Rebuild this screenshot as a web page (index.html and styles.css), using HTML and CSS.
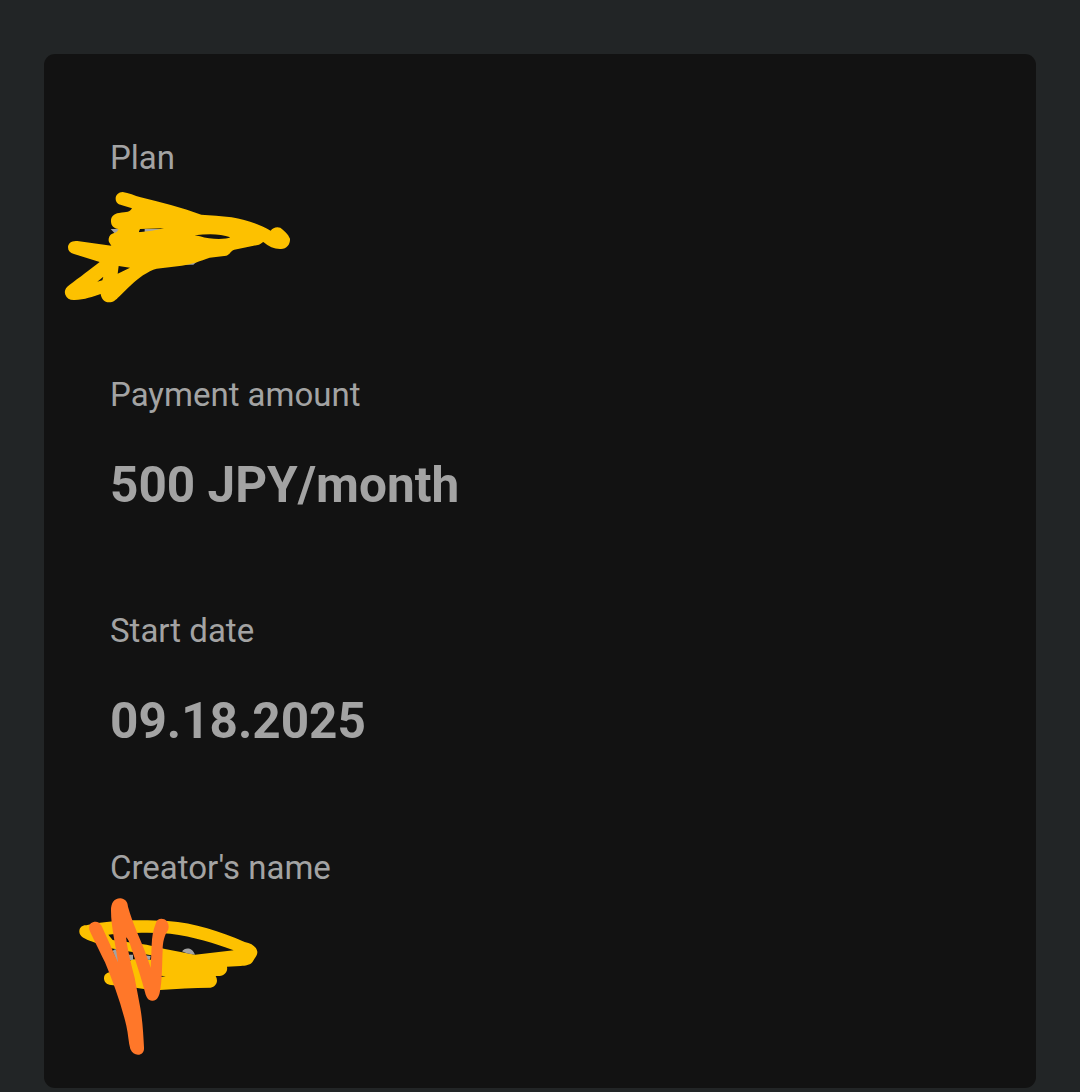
FILE: index.html
```html
<!DOCTYPE html>
<html lang="en">
<head>
    <meta charset="UTF-8">
    <meta name="viewport" content="width=device-width, initial-scale=1.0">
    <title>Plan details</title>
    <link rel="stylesheet" href="styles.css">
</head>
<body>
    <div class="plan-card">
        <div class="plan-item">
            <div class="label">Plan</div>
            <div class="value">
                <!-- Plan name is scribbled out -->
                <svg class="scribble scribble-plan" viewBox="0 0 750 390" aria-hidden="true">
                    <path class="covered" d="M182 147H345V162H196ZM400 240H446L430 254H400Z"/>
                    <path class="gap" d="M267 145H284V157H267Z"/>
                    <path class="yellow" fill-rule="evenodd" d="M218 36C205 36 196 46 197 58C198 69 205 73 216 76L246 85C239 97 232 96 207 99C190 101 182 112 183 125C184 138 192 145 205 147C203 158 195 157 185 162C177 167 174 178 177 186L184 197L82 183C65 181 54 190 54 202C54 213 60 219 72 222L149 246C125 265 85 295 59 314C46 322 42 334 46 344C50 355 60 361 74 360C104 359 129 350 152 342C154 356 163 367 177 367C190 367 198 359 207 350C232 327 255 302 279 286C294 277 306 269 320 266L395 257C430 252 449 243 479 233L529 227C542 222 541 212 553 209L627 194C633 192 636 188 640 186C657 200 674 208 693 207C711 206 721 192 720 176C714 161 702 151 691 143C680 139 668 143 662 152C628 133 588 119 545 112C514 107 482 106 454 104C394 82 331 67 272 52C254 47 236 38 218 36ZM266 157L270 147L342 145C318 150 293 155 266 157ZM434 166C475 161 511 161 541 172C529 179 479 179 450 169ZM206 258L240 263L203 281ZM160 290L157 301L142 305Z"/>
                </svg>
            </div>
        </div>
        <div class="plan-item">
            <div class="label">Payment amount</div>
            <div class="value">500 JPY/month</div>
        </div>
        <div class="plan-item">
            <div class="label">Start date</div>
            <div class="value">09.18.2025</div>
        </div>
        <div class="plan-item">
            <div class="label">Creator's name</div>
            <div class="value">
                <!-- Creator's name is scribbled out -->
                <svg class="scribble scribble-creator" viewBox="0 0 630 525" aria-hidden="true">
                    <path class="yellow" d="M79 106C140 90 240 88 323 93C405 99 480 124 554 156C575 160 589 170 592 185C593 197 583 205 578 215C570 226 556 226 542 228L501 230C504 245 494 256 479 258H467C476 273 469 290 452 293C398 293 350 297 300 300C270 301 247 295 227 293L153 285C140 284 132 276 132 265C132 252 142 247 154 246L158 215L151 177L98 155C73 147 57 138 58 123C59 112 67 105 79 106Z"/>
                    <path class="gap" d="M145 134C190 130 260 125 331 131C400 140 465 159 521 181L405 194L315 177L260 164L158 150ZM148 174L282 197L272 209L218 208L185 225L174 217L168 235L156 250L150 215ZM302 257L317 259L302 261Z"/>
                    <path class="covered" d="M158 182L166 177L185 200V225L170 215ZM203 194H219V210H203ZM252 196L272 198L270 209H256ZM366 184C375 171 397 171 405 194L380 190Z"/>
                    <path class="orange" d="M107 95C93 95 85 104 88 119C99 145 118 181 135 217C160 278 183 340 199 407C205 432 205 457 211 477C216 489 224 494 234 494C246 494 253 485 252 472C250 434 248 395 241 354L224 263C213 222 203 182 198 142C207 149 211 165 216 181C231 225 244 264 255 307C259 324 266 333 278 332C291 331 296 321 299 309C307 273 306 223 308 181C308 157 313 136 324 121C329 107 324 94 313 88C300 83 289 90 287 101C279 121 276 140 275 164L272 233C261 197 246 162 231 127C220 98 211 76 204 50C203 34 194 26 181 25C161 25 153 41 153 62C153 112 167 162 174 217C156 178 141 142 125 108C120 99 114 95 107 95Z"/>
                </svg>
            </div>
        </div>
    </div>
</body>
</html>
```
FILE: styles.css
```css
* {
    margin: 0;
    padding: 0;
    box-sizing: border-box;
}

body {
    padding: 54px 44px 4px;
    background-color: #222526;
    font-family: Roboto, sans-serif;
    color: #a3a3a3;
    overflow: hidden;
}

.plan-card {
    display: flex;
    flex-direction: column;
    gap: 84px;
    height: 1034px;
    padding: 79px 66px;
    background-color: #121212;
    border-radius: 11px;
}

.plan-item {
    display: flex;
    flex-direction: column;
    gap: 28.5px;
}

.label {
    font-size: 33px;
    line-height: 49.5px;
}

.value {
    position: relative;
    height: 74.5px;
    font-size: 49.5px;
    font-weight: bold;
    line-height: 74.5px;
}

/* Marker strokes over the hidden values */
.scribble {
    position: absolute;
    display: block;
}

.scribble-plan {
    top: -31px;
    left: -60px;
    width: 250px;
    height: 130px;
}

.scribble-creator {
    top: -30.5px;
    left: -50px;
    width: 210px;
    height: 175px;
}

.yellow {
    fill: #fdc100;
}

.orange {
    fill: #ff7729;
}

.covered {
    fill: #a3a3a3;
}

.gap {
    fill: #121212;
}
```
